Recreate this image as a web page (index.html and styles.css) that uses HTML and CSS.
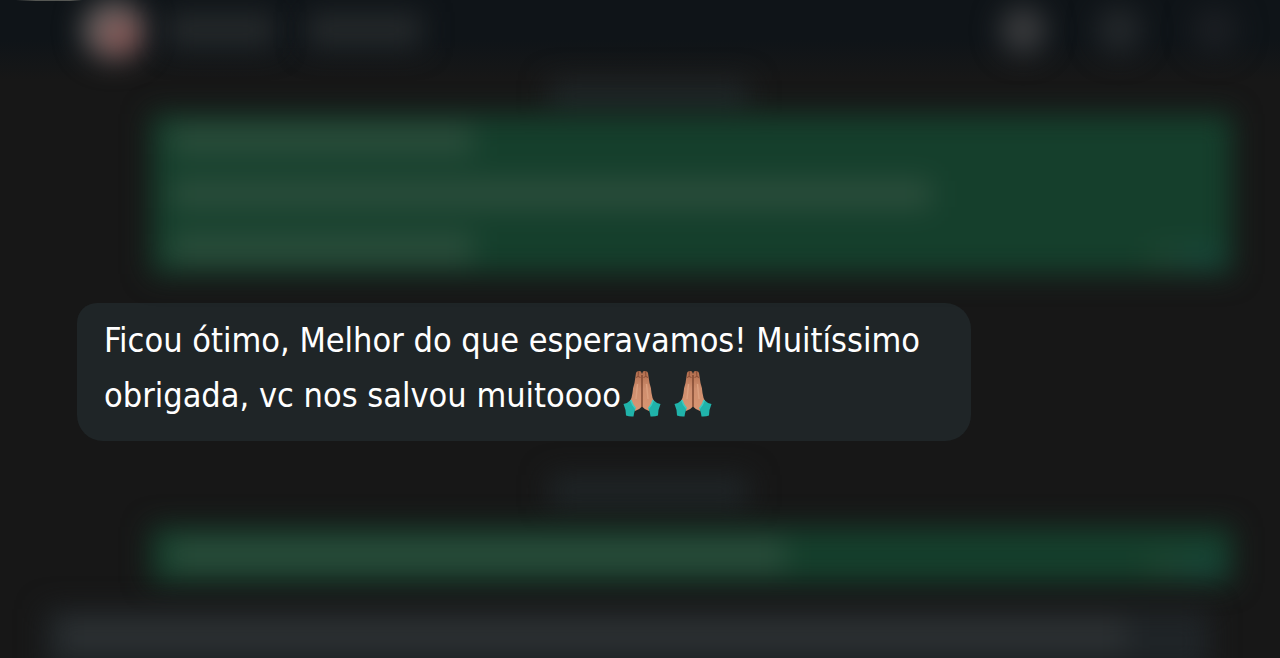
FILE: index.html
```html
<!DOCTYPE html>
<html lang="pt-BR">
<head>
<meta charset="utf-8">
<meta name="viewport" content="width=device-width, initial-scale=1">
<title>Conversa</title>
<link rel="stylesheet" href="styles.css">
</head>
<body>
<svg class="symbols" aria-hidden="true">
  <defs>
    <linearGradient id="skin" x1="0" y1="0" x2="0" y2="1">
      <stop offset="0" stop-color="#b06c4c"/>
      <stop offset=".45" stop-color="#cf8e6e"/>
      <stop offset="1" stop-color="#d89572"/>
    </linearGradient>
    <symbol id="pray" viewBox="0 0 38 48">
      <path d="M13 3Q13.500.8 15.500 1.200Q17 .5 18 1.500L19 4V36.500Q16 40 12 41L6.500 32Q9 28 9.500 23Q10 17 11.500 13Z" fill="url(#skin)"/>
      <path d="M25 3Q24.500.8 22.500 1.200Q21 .5 20 1.500L19 4V36.500Q22 40 26 41L31.500 32Q29 28 28.500 23Q28 17 26.500 13Z" fill="url(#skin)"/>
      <path d="M19 5V37" fill="none" stroke="#7b452f" stroke-width="1.400"/>
      <path d="M15.500 1.500L15 7M22.500 1.500L23 7M13 7.500Q15 5.500 17.500 7.500M20.500 7.500Q23 5.500 25 7.500" fill="none" stroke="#8a4e36"/>
      <path d="M14.500 14L13 29M23.500 14L25 29" fill="none" stroke="#dc9f7e" stroke-width="1.500"/>
      <path d="M.5 34Q5 33 7.800 30Q9 34.500 12.500 38.500Q11 42.500 10.500 46.500Q6 46.800 3 45.500Q3 39.500 .5 34Z" fill="#20b3aa"/>
      <path d="M37.500 34Q33 33 30.200 30Q29 34.500 25.500 38.500Q27 42.500 27.500 46.500Q32 46.800 35 45.500Q35 39.500 37.500 34Z" fill="#20b3aa"/>
      <path d="M7.800 30Q9 34.500 12.500 38.500M30.200 30Q29 34.500 25.500 38.500" fill="none" stroke="#3fcabf" stroke-width="1.500"/>
    </symbol>
  </defs>
</svg>
<header class="topbar">
  <div class="soft avatar"></div>
  <div class="soft name"></div>
  <div class="soft status"></div>
  <div class="tools">
    <div class="soft tool tool-strong"></div>
    <div class="soft tool"></div>
    <div class="soft tool tool-faint"></div>
  </div>
</header>
<main class="chat">
  <div class="soft day"></div>
  <div class="soft sent sent-tall">
    <div class="line line-short"></div>
    <div class="line line-long"></div>
    <div class="line line-short"></div>
    <div class="ticks"></div>
  </div>
  <p class="message">Ficou ótimo, Melhor do que esperavamos! Muitíssimo obrigada, vc nos salvou muitoooo<span class="hands"><svg role="img" aria-label="🙏🏽"><use href="#pray"/></svg><svg role="img" aria-label="🙏🏽"><use href="#pray"/></svg></span></p>
  <div class="soft day"></div>
  <div class="soft sent">
    <div class="line line-mid"></div>
    <div class="ticks"></div>
  </div>
  <div class="soft received">
    <div class="line line-wide"></div>
  </div>
</main>
</body>
</html>
```
FILE: styles.css
```css
* { box-sizing: border-box; }

body {
  margin: 0;
  height: 100vh;
  display: flex;
  flex-direction: column;
  overflow: hidden;
  background: #171717;
  font-family: "DejaVu Sans Condensed", "DejaVu Sans", sans-serif;
}

.symbols { position: absolute; width: 0; height: 0; }

.soft { filter: blur(14px); }

.topbar {
  display: flex;
  align-items: center;
  flex: none;
  height: 80px;
  padding: 0 42px 20px 82px;
  background:
    linear-gradient(90deg, transparent 16px, #555753 36px, #555753 70px, transparent 82px) top / 100% 1px no-repeat,
    linear-gradient(#0f1418 50%, #171717);
}

.avatar {
  width: 64px;
  height: 60px;
  border-radius: 50%;
  background: radial-gradient(circle at 60% 60%, #8a5553 20%, #6a6261 45%, #606463);
}

.name, .status {
  height: 36px;
  background: #24282a;
}

.name { width: 110px; margin-left: 20px; }
.status { width: 116px; margin-left: 30px; }

.tools {
  display: flex;
  gap: 50px;
  margin-left: auto;
}

.tool {
  width: 46px;
  height: 48px;
  border-radius: 50%;
  background: #23272a;
}

.tool-strong { background: #3a3b3d; }
.tool-faint { background: #1b1e22; }

.chat {
  flex: 1;
  min-height: 0;
  display: flex;
  flex-direction: column;
  padding: 0 48px 0 77px;
}

.day {
  flex: none;
  align-self: center;
  width: 200px;
  height: 32px;
  margin-right: 12px;
  background: #1f2527;
}

.sent {
  flex: none;
  position: relative;
  display: flex;
  flex-direction: column;
  justify-content: center;
  height: 56px;
  margin: 20px 0 0 74px;
  padding: 0 20px;
  background: #153f2c;
}

.sent-tall {
  justify-content: space-between;
  height: 160px;
  margin-top: 2px;
  padding: 12px 20px;
}

.line {
  height: 28px;
  background: #2c4e3c;
}

.line-short { width: 29%; }
.line-mid { width: 59%; }
.line-long { width: 73%; }

.ticks {
  position: absolute;
  right: 12px;
  bottom: 8px;
  width: 72px;
  height: 20px;
  background: linear-gradient(90deg, #20452f, #17483f);
}

.message {
  flex: none;
  width: 894px;
  max-width: 100%;
  margin: 29px 0 34px;
  padding: 10px 27px 18px;
  border-radius: 20px 26px 26px 26px;
  background: #1f2527;
  color: #fff;
  font-size: 34px;
  line-height: 55px;
}

.hands {
  display: inline-flex;
  gap: 13px;
  height: 48px;
  margin: -8px 0 0 2px;
  vertical-align: middle;
}

.hands svg { width: 38px; height: 48px; }

.received {
  flex: none;
  height: 64px;
  margin: 26px 22px 0 -32px;
  padding: 10px 16px;
  background: #1f2427;
}

.line-wide {
  width: 94%;
  height: 32px;
  background: #2d3133;
}
```
